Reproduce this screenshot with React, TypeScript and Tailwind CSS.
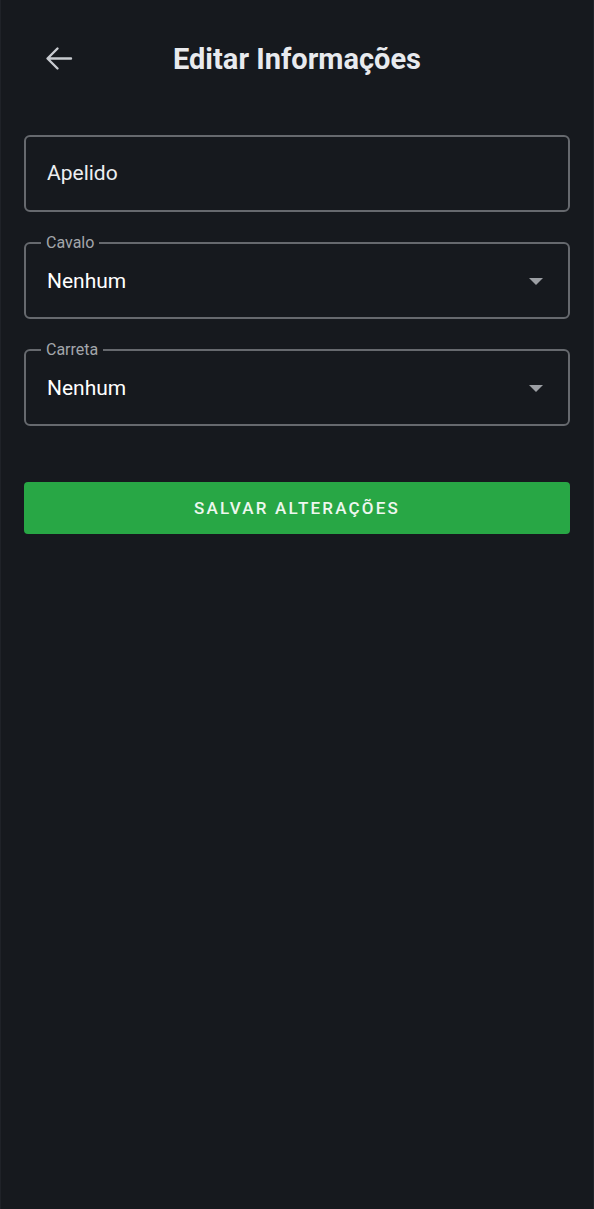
function SelectField({ label, value }: { label: string; value: string }) {
  return (
    <fieldset className="mt-[23px] rounded-md border-2 border-[#66696e] pl-[21px] pr-[25px] pt-4 pb-[22px]">
      <legend className="ml-[-6px] px-[5px] text-base leading-4 text-[#a3a6ab]">{label}</legend>
      <div className="flex items-center justify-between">
        <span className="text-[21px] leading-7 text-white">{value}</span>
        <svg width="14" height="7" viewBox="0 0 14 7" className="mt-px">
          <path d="M0 0h14L7 7z" fill="#9c9fa4" />
        </svg>
      </div>
    </fieldset>
  );
}

export default function App() {
  return (
    <div
      className="min-h-[1209px] w-full border-x border-[#1f2228] bg-[#16191e] px-[23px]"
      style={{ fontFamily: "Roboto, 'Liberation Sans', sans-serif" }}
    >
      {/* Header */}
      <div className="relative flex h-[119px] items-center justify-center">
        <button className="absolute left-[21px] top-[46px]">
          <svg width="28" height="25" viewBox="0 0 28 25" fill="none" stroke="#c8cbd0" strokeWidth="2.4" strokeLinecap="round" strokeLinejoin="round">
            <path d="M26 12.5H3M12.5 2.5 2.5 12.5l10 10" />
          </svg>
        </button>
        <h1 className="text-[29px] font-bold text-[#e8eaee]">Editar Informações</h1>
      </div>

      {/* Apelido */}
      <div className="mt-4 flex h-[77px] items-center rounded-md border-2 border-[#66696e] px-[21px]">
        <span className="text-[21px] text-[#eceef1]">Apelido</span>
      </div>

      <SelectField label="Cavalo" value="Nenhum" />
      <SelectField label="Carreta" value="Nenhum" />

      <button className="mt-[56px] flex h-[52px] w-full items-center justify-center rounded bg-[#28a745] pt-px text-[17px] font-medium tracking-[2.2px] text-[#eef7ef]">
        SALVAR ALTERAÇÕES
      </button>
    </div>
  );
}
